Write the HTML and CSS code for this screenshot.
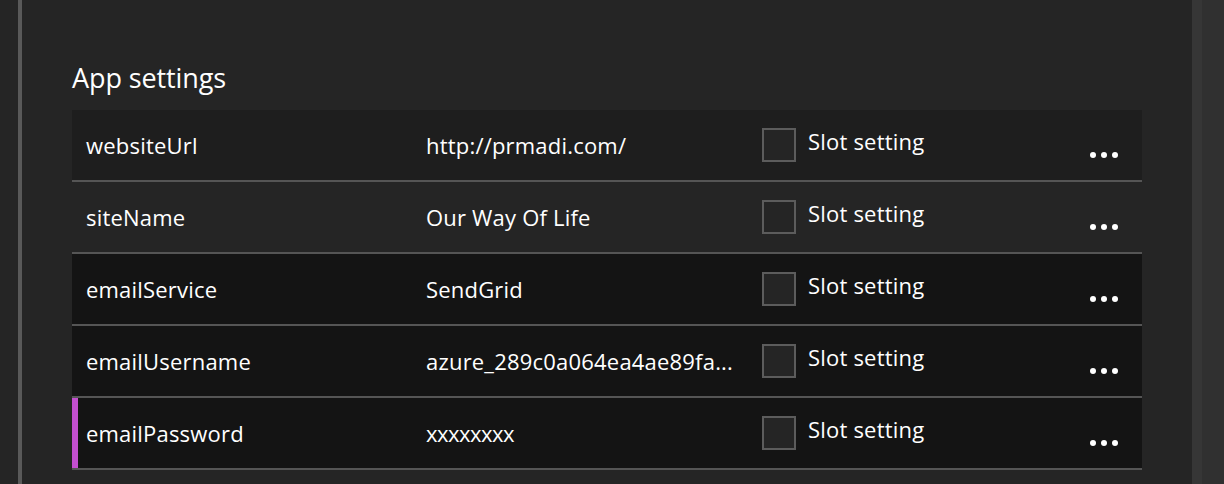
FILE: index.html
```html
<!DOCTYPE html>
<html>
<head>
<meta charset="utf-8">
<link rel="stylesheet" href="styles.css">
</head>
<body>
<div class="page">
  <div class="gutter"></div>
  <div class="panel">
    <h2 class="title">App settings</h2>
    <div class="table">
      <div class="row row-light">
        <div class="cell name">websiteUrl</div>
        <div class="cell value">http://prmadi.com/</div>
        <div class="cell slot"><span class="box"></span><span class="slot-label">Slot setting</span></div>
        <div class="cell more"><span class="dot"></span><span class="dot"></span><span class="dot"></span></div>
      </div>
      <div class="row row-hover">
        <div class="cell name">siteName</div>
        <div class="cell value">Our Way Of Life</div>
        <div class="cell slot"><span class="box"></span><span class="slot-label">Slot setting</span></div>
        <div class="cell more"><span class="dot"></span><span class="dot"></span><span class="dot"></span></div>
      </div>
      <div class="row">
        <div class="cell name">emailService</div>
        <div class="cell value">SendGrid</div>
        <div class="cell slot"><span class="box"></span><span class="slot-label">Slot setting</span></div>
        <div class="cell more"><span class="dot"></span><span class="dot"></span><span class="dot"></span></div>
      </div>
      <div class="row">
        <div class="cell name">emailUsername</div>
        <div class="cell value">azure_289c0a064ea4ae89fa...</div>
        <div class="cell slot"><span class="box"></span><span class="slot-label">Slot setting</span></div>
        <div class="cell more"><span class="dot"></span><span class="dot"></span><span class="dot"></span></div>
      </div>
      <div class="row row-active">
        <div class="cell name">emailPassword</div>
        <div class="cell value masked">xxxxxxxx</div>
        <div class="cell slot"><span class="box"></span><span class="slot-label">Slot setting</span></div>
        <div class="cell more"><span class="dot"></span><span class="dot"></span><span class="dot"></span></div>
      </div>
    </div>
  </div>
  <div class="scrollbar"></div>
  <div class="rightpane"></div>
</div>
</body>
</html>
```

FILE: styles.css
```css
html, body {
  margin: 0;
  padding: 0;
  background: #252525;
}
body {
  font-family: "Open Sans", "Noto Sans", sans-serif;
  color: #ffffff;
}
.page {
  display: flex;
  height: 484px;
  overflow: hidden;
}
.gutter {
  width: 18px;
  flex: none;
}
.panel {
  flex: 1;
  border-left: 4px solid #595959;
  padding: 58px 50px 0 50px;
}
.title {
  margin: 0 0 12px 0;
  font-size: 27px;
  font-weight: 400;
  line-height: 40px;
  letter-spacing: -0.1px;
}
.table {
  display: flex;
  flex-direction: column;
}
.row {
  display: flex;
  align-items: center;
  height: 70px;
  border-bottom: 2px solid #555555;
  background: #141414;
  font-size: 22px;
  letter-spacing: 0.2px;
  box-sizing: content-box;
}
.row-light {
  background: #1e1e1e;
}
.row-hover {
  background: #252525;
}
.row-active {
  box-shadow: inset 6px 0 0 #c34fd0;
}
.cell {
  flex: none;
}
.name {
  width: 340px;
  padding-left: 14px;
}
.value {
  width: 336px;
  white-space: nowrap;
  overflow: hidden;
}
.masked {
  letter-spacing: -0.5px;
}
.slot {
  display: flex;
  align-items: center;
}
.box {
  width: 30px;
  height: 30px;
  border: 2px solid #5c5c5c;
  background: #252525;
  margin-right: 12px;
  flex: none;
}
.slot-label {
  position: relative;
  top: -4px;
}
.more {
  display: flex;
  gap: 5px;
  margin-left: auto;
  margin-right: 24px;
  margin-top: 20px;
}
.dot {
  width: 6px;
  height: 6px;
  border-radius: 50%;
  background: #ffffff;
}
.scrollbar {
  width: 10px;
  flex: none;
  background: #363636;
}
.rightpane {
  width: 22px;
  flex: none;
  background: #303030;
}
```
